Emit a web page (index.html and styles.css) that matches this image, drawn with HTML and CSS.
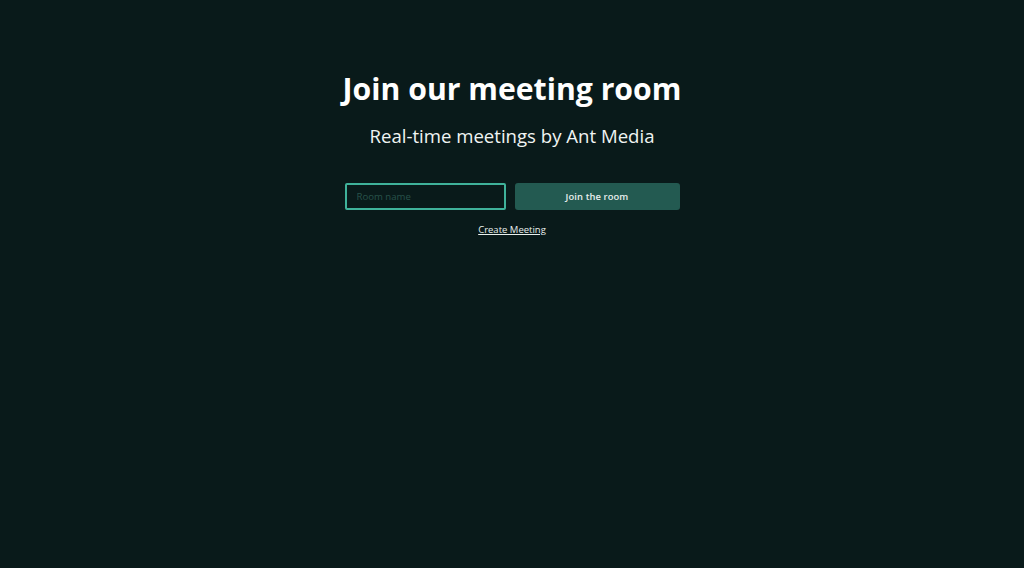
FILE: index.html
```html
<!DOCTYPE html>
<html lang="en">
<head>
<meta charset="utf-8">
<title>Join our meeting room</title>
<link rel="stylesheet" href="styles.css">
</head>
<body>
<main class="page">
  <h1 class="title">Join our meeting room</h1>
  <p class="subtitle">Real-time meetings by Ant Media</p>
  <form class="join-form">
    <input class="room-input" type="text" placeholder="Room name">
    <button class="join-btn" type="button">Join the room</button>
  </form>
  <a class="create-link" href="#">Create Meeting</a>
</main>
</body>
</html>
```

FILE: styles.css
```css
html, body {
  margin: 0;
  padding: 0;
  height: 100%;
  background: #091a1a;
}
body {
  font-family: "Open Sans", "Liberation Sans", sans-serif;
  color: #ffffff;
}
.page {
  display: flex;
  flex-direction: column;
  align-items: center;
  padding-top: 68px;
}
.title {
  margin: 0;
  font-size: 30.2px;
  font-weight: 700;
  line-height: 42px;
}
.subtitle {
  margin: 13px 0 0;
  font-size: 18.6px;
  font-weight: 400;
  line-height: 26px;
  color: #f0f4f3;
}
.join-form {
  display: flex;
  align-items: flex-start;
  gap: 9px;
  margin-top: 34px;
}
.room-input {
  box-sizing: border-box;
  width: 161px;
  height: 27px;
  border: 2px solid #3fb29a;
  border-radius: 2px;
  background: #091a1a;
  color: #ffffff;
  font-family: inherit;
  font-size: 9.6px;
  padding: 0 10px;
  outline: none;
}
.room-input::placeholder {
  color: #28524a;
}
.join-btn {
  box-sizing: border-box;
  width: 165px;
  height: 27px;
  border: none;
  border-radius: 3px;
  background: #235a51;
  color: #e8efed;
  font-family: inherit;
  font-size: 9.4px;
  font-weight: 600;
  letter-spacing: 0.1px;
  cursor: pointer;
}
.create-link {
  margin-top: 13px;
  font-size: 9.5px;
  line-height: 14px;
  color: #e8efed;
  text-decoration: underline;
}
```
